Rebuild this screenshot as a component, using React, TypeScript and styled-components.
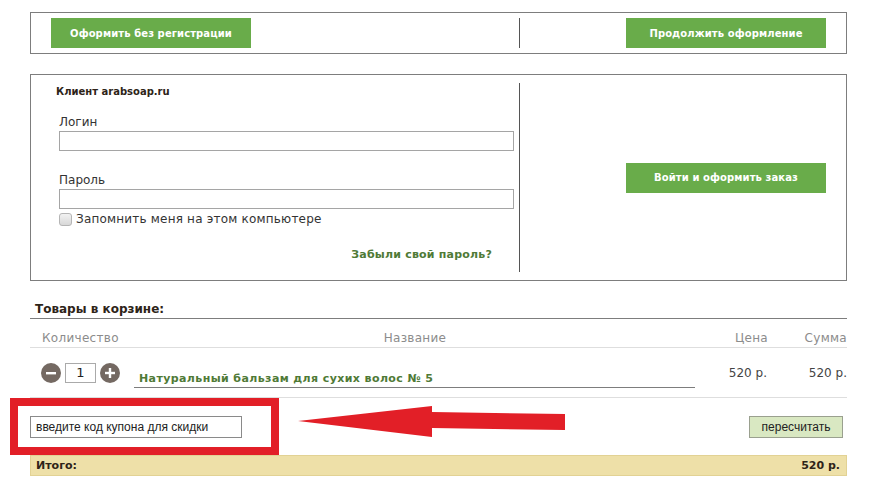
import styled, { createGlobalStyle } from "styled-components";

const Global = createGlobalStyle`
	body {
		margin: 0;
		background: #fff;
		font-family: "DejaVu Sans", Verdana, sans-serif;
		color: #333;
	}
	* { box-sizing: border-box; }
`;

const Page = styled.div`
	width: 847px;
	padding: 12px 0 4px 30px;
`;

const Box = styled.div`
	border: 1px solid #7d7d7d;
	display: grid;
	grid-template-columns: 488px 1fr;
	margin-top: ${(p: { $mt?: number }) => p.$mt || 0}px;
`;

const Cell = styled.div<{ $divider?: boolean; $end?: boolean }>`
	display: flex;
	align-items: center;
	justify-content: ${(p) => (p.$end ? "flex-end" : "flex-start")};
	padding: 0 20px;
	border-left: ${(p) => (p.$divider ? "1px solid #555" : "none")};
`;

const TopCell = styled(Cell)`
	margin: 5px 0;
`;

const GreenButton = styled.button`
	width: 200px;
	height: 30px;
	border: none;
	background: #69ac4a;
	color: #fff;
	font-family: "DejaVu Sans", Verdana, sans-serif;
	font-weight: bold;
	font-size: 10px;
	letter-spacing: 0.1px;
	cursor: pointer;
`;

const FormCell = styled.div`
	margin: 8px 0;
	padding: 1px 6px 9px 25px;
`;

const ClientTitle = styled.div`
	font-size: 10px;
	font-weight: bold;
	color: #2e2418;
	line-height: 16px;
`;

const Fields = styled.div`
	display: flex;
	flex-direction: column;
	padding-left: 3px;
`;

const Label = styled.label<{ $mt: number }>`
	font-size: 12px;
	line-height: 16px;
	color: #333;
	margin-top: ${(p) => p.$mt}px;
`;

const TextInput = styled.input`
	width: 455px;
	height: 20px;
	margin-top: 1px;
	border: 1px solid #a5a5a5;
	padding: 0 4px;
	background: #fff;
`;

const Remember = styled.label`
	display: flex;
	align-items: center;
	gap: 4px;
	margin-top: 1px;
	height: 18px;
	font-size: 12px;
	color: #333;
	letter-spacing: 0.2px;
`;

const Check = styled.span`
	width: 13px;
	height: 13px;
	border: 1px solid #b5b5b5;
	border-radius: 3px;
	background: linear-gradient(#f2f2f2, #d8d8d8);
`;

const Forgot = styled.a`
	align-self: flex-end;
	margin: 19px 21px 0 0;
	font-size: 11px;
	font-weight: bold;
	line-height: 16px;
	color: #4f7a36;
	text-decoration: none;
	letter-spacing: 0.2px;
`;

const LoginCell = styled(Cell)`
	margin: 8px 0;
`;

const CartTitle = styled.h3`
	margin: 20px 0 0;
	padding-left: 5px;
	font-size: 12px;
	font-weight: bold;
	line-height: 17px;
	color: #2e2418;
	border-bottom: 1px solid #7d7d7d;
`;

const Row = styled.div<{ $h: number }>`
	display: grid;
	grid-template-columns: 100px 570px 70px 77px;
	height: ${(p) => p.$h}px;
	border-bottom: 1px solid #dedede;
`;

const HeadCell = styled.div<{ $align: string; $pl?: number; $pr?: number }>`
	font-size: 12px;
	color: #8c8c8c;
	line-height: 16px;
	padding-top: 11px;
	padding-left: ${(p) => p.$pl || 0}px;
	padding-right: ${(p) => p.$pr || 0}px;
	text-align: ${(p) => p.$align};
	letter-spacing: 0.3px;
`;

const Qty = styled.div`
	display: flex;
	align-items: center;
	gap: 4px;
	padding-left: 11px;
`;

const RoundButton = styled.span`
	width: 20px;
	height: 20px;
	border-radius: 50%;
	background: #746962;
	color: #fff;
	display: flex;
	align-items: center;
	justify-content: center;
`;

const QtyInput = styled.div`
	width: 31px;
	height: 20px;
	border: 1px solid #aaa;
	font-size: 13px;
	text-align: center;
	line-height: 18px;
	color: #222;
`;

const ProductName = styled.a`
	align-self: start;
	margin: 23px 5px 0 4px;
	padding-left: 5px;
	font-size: 11px;
	font-weight: bold;
	line-height: 16px;
	color: #4f7a36;
	text-decoration: none;
	border-bottom: 1px solid #7d7d7d;
	letter-spacing: 0.4px;
`;

const Price = styled.div<{ $pr?: number }>`
	align-self: center;
	text-align: right;
	font-size: 12px;
	color: #444;
	padding-right: ${(p) => p.$pr || 0}px;
`;

const CouponRow = styled.div`
	position: relative;
	height: 57px;
	display: flex;
	align-items: center;
	justify-content: space-between;
	padding-right: 4px;
`;

const CouponInput = styled.div`
	width: 212px;
	height: 22px;
	border: 1px solid #8a8a8a;
	padding-left: 5px;
	font-family: "Liberation Sans", Arial, sans-serif;
	font-size: 12px;
	line-height: 20px;
	color: #222;
`;

const Recalc = styled.button`
	width: 94px;
	height: 22px;
	border: 1px solid #9aa08f;
	background: #d9e8c2;
	font-family: "Liberation Sans", Arial, sans-serif;
	font-size: 12px;
	color: #222;
`;

const RedFrame = styled.div`
	position: absolute;
	left: -20px;
	top: 0;
	width: 269px;
	height: 57px;
	border: 8px solid #e21f27;
`;

const Arrow = styled.svg`
	position: absolute;
	left: 266px;
	top: 6px;
`;

const Total = styled.div`
	display: flex;
	justify-content: space-between;
	height: 21px;
	padding: 0 6px 0 5px;
	background: #eee0a8;
	border: 1px solid #e2d294;
	font-size: 11px;
	font-weight: bold;
	line-height: 19px;
	color: #2e2418;
`;

export default function App() {
	return (
		<Page>
			<Global />
			<Box>
				<TopCell>
					<GreenButton>Оформить без регистрации</GreenButton>
				</TopCell>
				<TopCell $divider $end>
					<GreenButton>Продолжить оформление</GreenButton>
				</TopCell>
			</Box>

			<Box $mt={20}>
				<FormCell>
					<ClientTitle>Клиент arabsoap.ru</ClientTitle>
					<Fields>
						<Label $mt={14}>Логин</Label>
						<TextInput />
						<Label $mt={21}>Пароль</Label>
						<TextInput type="password" />
						<Remember>
							<Check />
							Запомнить меня на этом компьютере
						</Remember>
						<Forgot href="#">Забыли свой пароль?</Forgot>
					</Fields>
				</FormCell>
				<LoginCell $divider $end>
					<GreenButton>Войти и оформить заказ</GreenButton>
				</LoginCell>
			</Box>

			<CartTitle>Товары в корзине:</CartTitle>
			<Row $h={29}>
				<HeadCell $align="left" $pl={12}>Количество</HeadCell>
				<HeadCell $align="center">Название</HeadCell>
				<HeadCell $align="right" $pr={2}>Цена</HeadCell>
				<HeadCell $align="right">Сумма</HeadCell>
			</Row>
			<Row $h={50}>
				<Qty>
					<RoundButton>
						<svg width="12" height="12" viewBox="0 0 12 12">
							<rect x="1" y="5" width="10" height="2.4" fill="#fff" />
						</svg>
					</RoundButton>
					<QtyInput>1</QtyInput>
					<RoundButton>
						<svg width="12" height="12" viewBox="0 0 12 12">
							<rect x="1" y="4.8" width="10" height="2.4" fill="#fff" />
							<rect x="4.8" y="1" width="2.4" height="10" fill="#fff" />
						</svg>
					</RoundButton>
				</Qty>
				<ProductName href="#">Натуральный бальзам для сухих волос № 5</ProductName>
				<Price $pr={3}>520 р.</Price>
				<Price>520 р.</Price>
			</Row>

			<CouponRow>
				<CouponInput>введите код купона для скидки</CouponInput>
				<Recalc>пересчитать</Recalc>
				<RedFrame />
				<Arrow width="272" height="36" viewBox="0 0 272 36">
					<polygon
						points="2,17 136,2 136,8 269,10 269,26 136,24 136,33"
						fill="#e21f27"
					/>
				</Arrow>
			</CouponRow>

			<Total>
				<span>Итого:</span>
				<span>520 р.</span>
			</Total>
		</Page>
	);
}
